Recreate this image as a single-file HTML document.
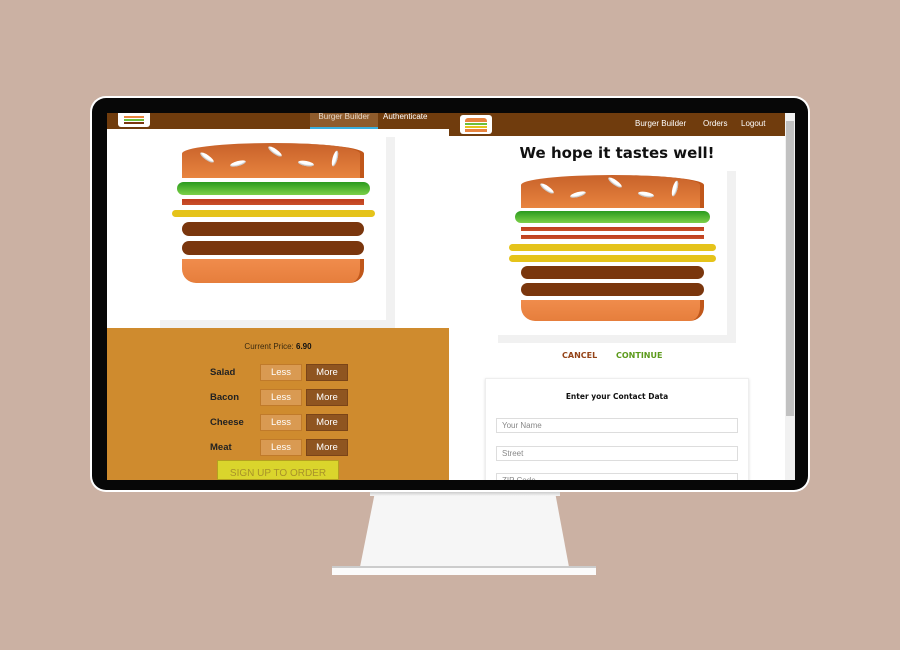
<!DOCTYPE html>
<html><head><meta charset="utf-8"><style>
*{margin:0;padding:0;box-sizing:border-box}
body{width:900px;height:650px;background:#cbb1a3;position:relative;overflow:hidden;font-family:"Liberation Sans",sans-serif}
.a{position:absolute}
.bun{background:linear-gradient(#c8622a,#e8843f);border-right:4px solid #c0571a}
.seed{position:absolute;width:16px;height:5px;background:#fff;border-radius:50%;box-shadow:inset 0 -1px 1px #bbb}
.sal{background:linear-gradient(#2a9a1e,#7cd048);border-radius:7px}
.bac{background:linear-gradient(#bf3e1c,#c9502a)}
.che{background:#e5c31a;border-radius:4px}
.meat{background:#7a360d;border-radius:7px}
.bot{background:linear-gradient(#f08c4c,#e67e3c);border-radius:0 0 14px 14px;border-right:4px solid #c0571a}
.btn{position:absolute;width:42px;height:17px;font-size:9.5px;color:#fff;text-align:center;line-height:16px}
.less{background:#d99a52;border:1px solid #c07a2a}
.more{background:#8f5520;border:1px solid #7a4418}
.lab{position:absolute;left:210px;font-size:9.5px;font-weight:bold;color:#222}
.inp{position:absolute;left:496px;width:242px;height:15px;border:1px solid #ddd;font-size:8px;color:#888;padding-left:5px;line-height:13px;background:#fff}
</style></head><body>
<div class="a" style="left:90px;top:96px;width:720px;height:396px;background:#fff;border-radius:16px"></div>
<div class="a" style="left:92px;top:98px;width:716px;height:392px;background:#070707;border-radius:14px"></div>
<div class="a" style="left:360px;top:492px;width:209px;height:76px;background:#f6f6f6;clip-path:polygon(15px 0,195px 0,209px 75px,0 75px)"></div>
<div class="a" style="left:370px;top:492px;width:190px;height:4px;background:linear-gradient(#ccc,#f6f6f6)"></div>
<div class="a" style="left:332px;top:566px;width:264px;height:9px;background:#fbfbfb;border-top:2px solid #ccc"></div>

<div class="a" style="left:107px;top:113px;width:342px;height:367px;background:#fff;overflow:hidden">
 <div class="a" style="left:0;top:0;width:342px;height:16px;background:#703c0d"></div>
 <div class="a" style="left:11px;top:0;width:32px;height:14px;background:#fff;border-radius:0 0 3px 3px"></div>
 <div class="a" style="left:17px;top:3px;width:20px;height:2px;background:#e8843f"></div>
 <div class="a" style="left:17px;top:6px;width:20px;height:2px;background:#6cbf3a"></div>
 <div class="a" style="left:17px;top:9px;width:20px;height:2px;background:#7a360d"></div>
 <div class="a" style="left:203px;top:0;width:68px;height:16px;background:#8f5c2c;border-bottom:2px solid #3ab0e0;color:#e8d8c8;font-size:8px;text-align:center;line-height:8px">Burger Builder</div>
 <div class="a" style="left:276px;top:0;font-size:8px;color:#fff;line-height:8px">Authenticate</div>
 <div class="a" style="left:279px;top:24px;width:9px;height:191px;background:#f1f1f1"></div>
 <div class="a" style="left:53px;top:207px;width:235px;height:8px;background:#f1f1f1"></div>
 <div class="a bun" style="left:75px;top:30px;width:182px;height:35px;border-radius:50% 50% 0 0/30% 30% 0 0"></div>
 <div class="seed" style="left:92px;top:42px;transform:rotate(35deg)"></div>
 <div class="seed" style="left:123px;top:48px;transform:rotate(-15deg)"></div>
 <div class="seed" style="left:160px;top:36px;transform:rotate(35deg)"></div>
 <div class="seed" style="left:191px;top:48px;transform:rotate(10deg)"></div>
 <div class="seed" style="left:220px;top:43px;transform:rotate(-75deg)"></div>
 <div class="a sal" style="left:70px;top:69px;width:193px;height:13px"></div>
 <div class="a bac" style="left:75px;top:86px;width:182px;height:6px"></div>
 <div class="a che" style="left:65px;top:97px;width:203px;height:7px"></div>
 <div class="a meat" style="left:75px;top:109px;width:182px;height:14px"></div>
 <div class="a meat" style="left:75px;top:128px;width:182px;height:14px"></div>
 <div class="a bot" style="left:75px;top:146px;width:182px;height:24px"></div>
 <div class="a" style="left:0;top:215px;width:342px;height:152px;background:#cf8b2e"></div>
</div>
<div class="a" style="left:107px;top:342px;width:342px;text-align:center;font-size:8px;color:#3a2a10">Current Price: <b style="color:#111">6.90</b></div>
<div class="lab" style="top:367px">Salad</div>
<div class="lab" style="top:392px">Bacon</div>
<div class="lab" style="top:417px">Cheese</div>
<div class="lab" style="top:442px">Meat</div>
<div class="btn less" style="left:260px;top:364px">Less</div><div class="btn more" style="left:306px;top:364px">More</div>
<div class="btn less" style="left:260px;top:389px">Less</div><div class="btn more" style="left:306px;top:389px">More</div>
<div class="btn less" style="left:260px;top:414px">Less</div><div class="btn more" style="left:306px;top:414px">More</div>
<div class="btn less" style="left:260px;top:439px">Less</div><div class="btn more" style="left:306px;top:439px">More</div>
<div class="a" style="left:217px;top:460px;width:122px;height:20px;background:#dad52c;border:1px solid #b5a020;color:#a8922a;font-size:10px;text-align:center;line-height:26px;overflow:hidden">SIGN UP TO ORDER</div>

<div class="a" style="left:449px;top:113px;width:346px;height:367px;background:#fff;overflow:hidden">
 <div class="a" style="left:0;top:0;width:336px;height:23px;background:#703c0d"></div>
 <div class="a" style="left:11px;top:2px;width:32px;height:19px;background:#fff;border-radius:3px"></div>
 <div class="a" style="left:16px;top:5px;width:22px;height:4px;background:#e8843f;border-radius:3px 3px 0 0"></div>
 <div class="a" style="left:16px;top:10px;width:22px;height:2px;background:#6cbf3a"></div>
 <div class="a" style="left:16px;top:13px;width:22px;height:2px;background:#e5c31a"></div>
 <div class="a" style="left:16px;top:16px;width:22px;height:3px;background:#e8843f"></div>
 <div class="a" style="left:186px;top:6px;font-size:8px;color:#fff">Burger Builder</div>
 <div class="a" style="left:254px;top:6px;font-size:8px;color:#fff">Orders</div>
 <div class="a" style="left:292px;top:6px;font-size:8px;color:#fff">Logout</div>
 <div class="a" style="left:336px;top:0;width:10px;height:367px;background:#f1f1f1"></div>
 <div class="a" style="left:337px;top:8px;width:8px;height:295px;background:#c1c1c1"></div>
 <div class="a" style="left:0;top:31px;width:336px;text-align:center;font-size:15px;font-weight:bold;color:#111;font-family:'DejaVu Sans',sans-serif">We hope it tastes well!</div>
 <div class="a" style="left:278px;top:58px;width:9px;height:172px;background:#f1f1f1"></div>
 <div class="a" style="left:49px;top:222px;width:238px;height:8px;background:#f1f1f1"></div>
 <div class="a bun" style="left:72px;top:62px;width:183px;height:33px;border-radius:50% 50% 0 0/30% 30% 0 0"></div>
 <div class="seed" style="left:90px;top:73px;transform:rotate(35deg)"></div>
 <div class="seed" style="left:121px;top:79px;transform:rotate(-15deg)"></div>
 <div class="seed" style="left:158px;top:67px;transform:rotate(35deg)"></div>
 <div class="seed" style="left:189px;top:79px;transform:rotate(10deg)"></div>
 <div class="seed" style="left:218px;top:73px;transform:rotate(-75deg)"></div>
 <div class="a sal" style="left:66px;top:98px;width:195px;height:12px"></div>
 <div class="a bac" style="left:72px;top:114px;width:183px;height:4px"></div>
 <div class="a bac" style="left:72px;top:122px;width:183px;height:4px"></div>
 <div class="a che" style="left:60px;top:131px;width:207px;height:7px"></div>
 <div class="a che" style="left:60px;top:142px;width:207px;height:7px"></div>
 <div class="a meat" style="left:72px;top:153px;width:183px;height:13px"></div>
 <div class="a meat" style="left:72px;top:170px;width:183px;height:13px"></div>
 <div class="a bot" style="left:72px;top:187px;width:183px;height:21px"></div>
 <div class="a" style="left:113px;top:238px;font-size:8px;font-weight:bold;color:#944317;font-family:'DejaVu Sans',sans-serif">CANCEL</div>
 <div class="a" style="left:167px;top:238px;font-size:8px;font-weight:bold;color:#5c9a1b;font-family:'DejaVu Sans',sans-serif">CONTINUE</div>
 <div class="a" style="left:36px;top:265px;width:264px;height:120px;background:#fff;border:1px solid #eee;box-shadow:0 1px 3px #ddd"></div>
 <div class="a" style="left:36px;top:279px;width:264px;text-align:center;font-size:7.5px;font-weight:bold;color:#111;font-family:'DejaVu Sans',sans-serif">Enter your Contact Data</div>
</div>
<div class="inp" style="top:418px">Your Name</div>
<div class="inp" style="top:446px">Street</div>
<div class="inp" style="top:473px;height:7px;border-bottom:none;overflow:hidden">ZIP Code</div>
</body></html>
